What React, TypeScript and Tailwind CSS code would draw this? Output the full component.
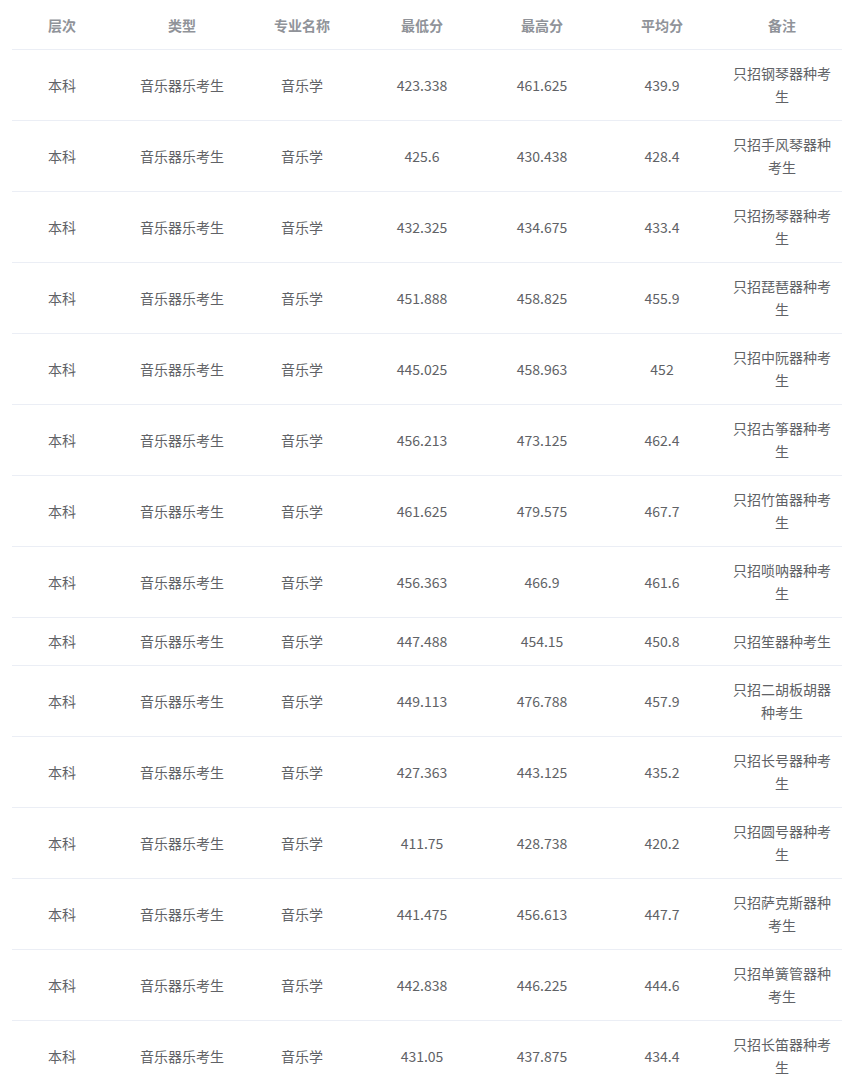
const rows: [string, string, string, string][] = [
  ["423.338", "461.625", "439.9", "只招钢琴器种考生"],
  ["425.6", "430.438", "428.4", "只招手风琴器种考生"],
  ["432.325", "434.675", "433.4", "只招扬琴器种考生"],
  ["451.888", "458.825", "455.9", "只招琵琶器种考生"],
  ["445.025", "458.963", "452", "只招中阮器种考生"],
  ["456.213", "473.125", "462.4", "只招古筝器种考生"],
  ["461.625", "479.575", "467.7", "只招竹笛器种考生"],
  ["456.363", "466.9", "461.6", "只招唢呐器种考生"],
  ["447.488", "454.15", "450.8", "只招笙器种考生"],
  ["449.113", "476.788", "457.9", "只招二胡板胡器种考生"],
  ["427.363", "443.125", "435.2", "只招长号器种考生"],
  ["411.75", "428.738", "420.2", "只招圆号器种考生"],
  ["441.475", "456.613", "447.7", "只招萨克斯器种考生"],
  ["442.838", "446.225", "444.6", "只招单簧管器种考生"],
  ["431.05", "437.875", "434.4", "只招长笛器种考生"],
];

const heads = ["层次", "类型", "专业名称", "最低分", "最高分", "平均分", "备注"];

export default function App() {
  return (
    <div
      className="min-h-screen bg-white pl-[12px] pr-[20px] text-[14px] leading-[23px]"
      style={{ fontFamily: '"Noto Sans CJK SC", "Noto Sans", sans-serif' }}
    >
      <table className="w-[830px] table-fixed border-collapse">
        <colgroup>
          <col className="w-[120px]" />
          <col className="w-[120px]" />
          <col className="w-[120px]" />
          <col className="w-[120px]" />
          <col className="w-[120px]" />
          <col className="w-[120px]" />
          <col className="w-[110px]" />
        </colgroup>
        <thead>
          <tr className="border-b border-[#ebeef5]">
            {heads.map((h, i) => (
              <th
                key={h}
                className={`pt-[14px] pb-[12px] text-center font-bold text-[#909399] ${i === 6 ? "pr-[10px]" : "pr-[20px]"}`}
              >
                {h}
              </th>
            ))}
          </tr>
        </thead>
        <tbody className="text-[#606266]">
          {rows.map((r) => (
            <tr key={r[3]} className="border-b border-[#ebeef5]">
              <td className="py-[12px] pr-[20px] text-center">本科</td>
              <td className="py-[12px] pr-[20px] text-center">音乐器乐考生</td>
              <td className="py-[12px] pr-[20px] text-center">音乐学</td>
              <td className="py-[12px] pr-[20px] text-center">{r[0]}</td>
              <td className="py-[12px] pr-[20px] text-center">{r[1]}</td>
              <td className="py-[12px] pr-[20px] text-center">{r[2]}</td>
              <td className="py-[12px] pr-[10px] text-center break-all">{r[3]}</td>
            </tr>
          ))}
        </tbody>
      </table>
    </div>
  );
}
